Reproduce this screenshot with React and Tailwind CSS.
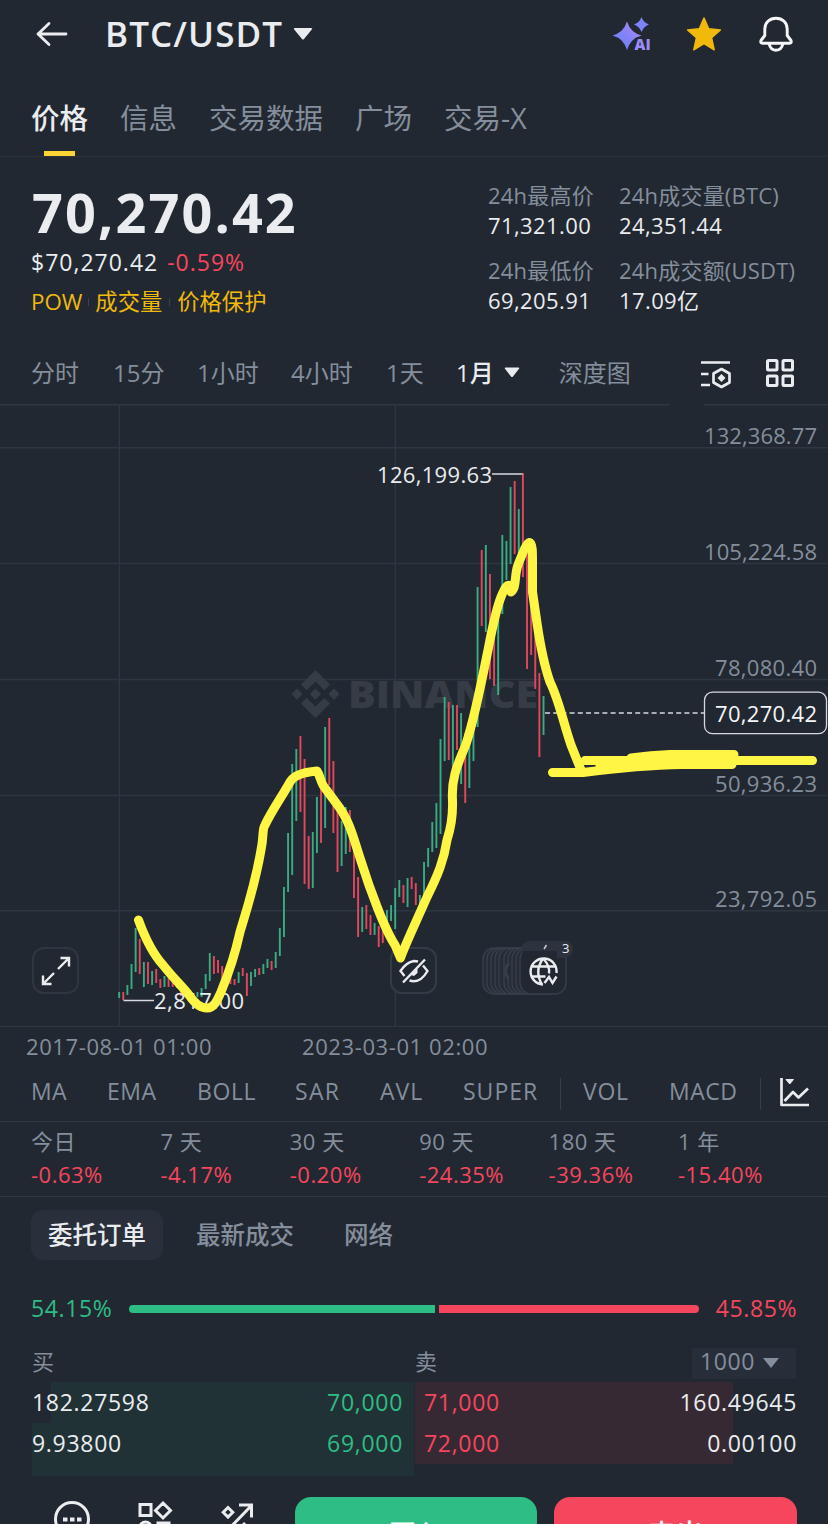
const mainTabs = ['价格', '信息', '交易数据', '广场', '交易-X'];

const stats = [
  { label: '24h最高价', value: '71,321.00' },
  { label: '24h成交量(BTC)', value: '24,351.44' },
  { label: '24h最低价', value: '69,205.91' },
  { label: '24h成交额(USDT)', value: '17.09亿' },
];

const performance = [
  { label: '今日', value: '-0.63%' },
  { label: '7 天', value: '-4.17%' },
  { label: '30 天', value: '-0.20%' },
  { label: '90 天', value: '-24.35%' },
  { label: '180 天', value: '-39.36%' },
  { label: '1 年', value: '-15.40%' },
];

// [direction, high y, low y], one entry per month
const candles = [
  ['g', 992, 998], ['r', 992, 1000], ['g', 985, 995], ['g', 964, 989], ['g', 928, 972],
  ['r', 939, 974], ['g', 962, 987], ['r', 962, 984], ['g', 971, 985], ['r', 969, 983],
  ['r', 979, 988], ['g', 976, 987], ['r', 977, 987], ['r', 980, 987], ['g', 981, 988],
  ['r', 984, 996], ['r', 990, 997], ['g', 991, 998], ['r', 993, 998], ['g', 992, 997],
  ['g', 988, 997], ['g', 974, 989], ['g', 953, 981], ['r', 956, 974], ['r', 960, 973],
  ['r', 966, 983], ['r', 968, 981], ['r', 970, 984], ['r', 979, 985], ['g', 972, 983],
  ['r', 968, 976], ['r', 973, 996], ['g', 972, 986], ['g', 969, 977], ['r', 968, 975],
  ['g', 964, 974], ['g', 959, 968], ['r', 961, 970], ['g', 952, 968], ['g', 928, 956],
  ['g', 887, 937], ['g', 833, 892], ['g', 764, 875], ['g', 749, 821], ['r', 736, 812],
  ['r', 759, 884], ['r', 836, 889], ['g', 832, 888], ['g', 797, 853], ['r', 780, 843],
  ['g', 727, 828], ['r', 718, 785], ['r', 761, 833], ['r', 806, 872], ['g', 821, 866],
  ['g', 807, 854], ['r', 810, 852], ['r', 843, 898], ['r', 877, 937], ['g', 907, 932],
  ['r', 905, 929], ['r', 915, 935], ['g', 923, 935], ['r', 926, 947], ['r', 930, 943],
  ['g', 910, 930], ['g', 905, 921], ['g', 888, 929], ['g', 880, 897], ['r', 885, 903],
  ['g', 878, 907], ['r', 877, 889], ['r', 883, 905], ['g', 895, 905], ['g', 862, 900],
  ['g', 848, 867], ['g', 822, 852], ['g', 803, 848], ['g', 739, 834], ['g', 697, 761],
  ['r', 702, 760], ['g', 705, 770], ['r', 705, 750], ['g', 713, 784], ['r', 733, 803],
  ['g', 733, 788], ['g', 723, 761], ['g', 587, 727], ['r', 550, 626], ['g', 545, 632],
  ['r', 574, 679], ['r', 633, 686], ['g', 613, 695], ['g', 535, 614], ['g', 541, 580],
  ['g', 487, 564], ['r', 481, 554], ['g', 509, 553], ['r', 473, 577], ['r', 552, 669],
  ['r', 607, 655], ['r', 620, 689], ['r', 673, 757], ['g', 696, 735],
];

const axisLabels = [
  { y: 444, text: '132,368.77', w: 113 },
  { y: 560, text: '105,224.58', w: 113 },
  { y: 675.5, text: '78,080.40', w: 102 },
  { y: 791.5, text: '50,936.23', w: 102 },
  { y: 907, text: '23,792.05', w: 102 },
];

const Header = () => (
  <div className="flex h-[68px] items-center pl-9 pr-[35px]">
    <svg width="32" height="26" viewBox="0 0 32 26" fill="none" stroke="#eaecef" strokeWidth="2.8" strokeLinecap="round" strokeLinejoin="round">
      <path d="M30 13H2M13 2.5L2 13l11 10.5" />
    </svg>
    <h1 className="ml-[37px] text-[35px] font-semibold leading-[50px] tracking-[1.1px]">BTC/USDT</h1>
    <svg className="ml-2.5" width="20" height="14" viewBox="0 0 20 14" fill="#eaecef">
      <path d="M2 1h16q2 0 .8 1.6L11 12q-1 1.200-2 0L1.200 2.600Q0 1 2 1z" />
    </svg>
    <div className="ml-auto flex items-center">
      <svg width="40" height="38" viewBox="0 0 40 38">
        <defs>
          <linearGradient id="ai" x1="0" y1="1" x2="1" y2="0">
            <stop offset="0" stopColor="#5f7cf5" />
            <stop offset="0.5" stopColor="#8583f8" />
            <stop offset="1" stopColor="#b08bf0" />
          </linearGradient>
        </defs>
        <path fill="url(#ai)" d="M15 6.500Q18.500 17.500 29.500 20.500Q18.500 23.500 15 35Q11.500 23.500 .5 20.500Q11.500 17.500 15 6.500z" />
        <path fill="#7c83f7" d="M29.500 2Q31.500 7.500 37 9.500Q31.500 11.500 29.500 17Q27.500 11.500 22 9.500Q27.500 7.500 29.500 2z" />
        <text x="22.500" y="34.500" fontSize="15" fontWeight="800" fill="#9b8cf5" stroke="#222831" strokeWidth="3" paintOrder="stroke">AI</text>
      </svg>
      <svg className="ml-[34px]" width="36" height="36" viewBox="0 0 36 36" fill="#f0b90b" stroke="#f0b90b" strokeWidth="1.500" strokeLinejoin="round">
        <path d="M18 2l4.700 10.800 11.700 1.200-8.800 7.800 2.600 12L18 27.700 7.800 33.800l2.600-12L1.600 14l11.700-1.200z" />
      </svg>
      <svg className="ml-[37px]" width="34" height="36" viewBox="0 0 34 36" fill="none" stroke="#f5f6f8" strokeWidth="2.900" strokeLinejoin="round">
        <path d="M17 2.200C10.500 2.200 5.800 6.800 5.800 13v6.500L2 24.500q-1 2.700 1.600 2.700h26.800q2.600 0 1.600-2.700l-3.800-5V13C28.200 6.800 23.500 2.200 17 2.200z" />
        <path d="M10 27.500q1.500 6.700 7 6.700t7-6.700" />
      </svg>
    </div>
  </div>
);

const PriceSection = () => (
  <div className="flex h-[187px] justify-between pl-8 pr-[31px]">
    <div className="pt-5">
      <div className="text-[54px] font-bold leading-[71px] tracking-[2.1px]">70,270.42</div>
      <div className="-ml-px flex gap-[9px] text-[23px] font-medium leading-7 tracking-[1px]">
        <span>$70,270.42</span>
        <span className="text-[#f6465d]">-0.59%</span>
      </div>
      <div className="-ml-px mt-3 flex items-center text-[22.3px] leading-7 text-[#f0b90b]">
        <span>POW</span>
        <span className="mx-1.5 h-2 w-px bg-[#3b424d]" />
        <span>成交量</span>
        <span className="mx-[7px] h-2 w-px bg-[#3b424d]" />
        <span>价格保护</span>
      </div>
    </div>
    <div className="grid h-[150px] w-[309px] grid-cols-[131px_178px] pt-6">
      {stats.map((item) => (
        <div key={item.label} className="h-[75px] whitespace-nowrap text-[22px]">
          <div className="leading-[29px] tracking-[0.2px] text-[#848e9c]">{item.label}</div>
          <div className="leading-[30px] tracking-[0.4px]">{item.value}</div>
        </div>
      ))}
    </div>
  </div>
);

const IntervalBar = () => (
  <div className="flex h-[60px] items-center pb-[3px] pl-[31px] pr-8 text-2xl text-[#848e9c]">
    <span className="w-[82px]">分时</span>
    <span className="w-[84px]">15分</span>
    <span className="w-[94px]">1小时</span>
    <span className="w-[95px]">4小时</span>
    <span className="w-[70px]">1天</span>
    <span className="font-medium text-[#eaecef]">1月</span>
    <svg className="ml-2.5" width="16" height="11" viewBox="0 0 16 11" fill="#eaecef">
      <path d="M1.500 .5h13q1.500 0 .5 1.300L9 9.500q-1 1-2 0L1 1.800Q0 .5 1.500 .5z" />
    </svg>
    <span className="ml-[39px]">深度图</span>
    <svg className="ml-auto mt-0.5" width="32" height="30" viewBox="0 0 32 30" fill="none" stroke="#eaecef" strokeWidth="2.700">
      <path d="M1 3.500h29M1 15h7.500M1 26h9" />
      <path strokeLinejoin="round" d="M21.500 10l8 4.500v9l-8 4.500-8-4.500v-9z" />
      <path fill="#eaecef" stroke="none" d="M21.500 15l4 4-4 4-4-4z" />
    </svg>
    <svg className="ml-8" width="32" height="30" viewBox="0 0 32 30" fill="none" stroke="#eaecef" strokeWidth="3">
      <rect x="3.500" y="2.500" width="9.500" height="9.500" rx="1" />
      <rect x="19" y="2.500" width="9.500" height="9.500" rx="1" />
      <rect x="3.500" y="18" width="9.500" height="9.500" rx="1" />
      <rect x="19" y="18" width="9.500" height="9.500" rx="1" />
    </svg>
  </div>
);

const Chart = () => (
  <div className="relative h-[622px]">
    <svg className="block" width="828" height="622" viewBox="0 404 828 622" fontSize="22">
      <g stroke="#2f3641" strokeWidth="1.500">
        <path d="M0 404.700H670M704 404.700H828M0 447.700H828M0 563.500H828M0 679.500H828M0 795.500H828M0 910.700H828" />
        <path d="M119.300 404V1026M395.300 404V1026" />
      </g>

      {/* watermark */}
      <g fill="#363c46">
        <path d="M315.500 670l14.500 14.500-5.700 5.700-8.800-8.800-8.800 8.800-5.700-5.700z" />
        <path d="M315.500 718l14.500-14.500-5.700-5.700-8.800 8.800-8.800-8.800-5.700 5.700z" />
        <path d="M315.500 688.500l5.600 5.600-5.600 5.600-5.600-5.600zM297 688.500l5.600 5.600-5.600 5.600-5.600-5.600zM334 688.500l5.600 5.600-5.600 5.600-5.600-5.600z" />
        <text x="348" y="707.500" fontSize="37" fontWeight="800" textLength="190" lengthAdjust="spacingAndGlyphs">BINANCE</text>
      </g>

      {candles.map(([dir, high, low], i) => (
        <rect key={i} x={118.2 + i * 4.12} y={high} width="1.900" height={low - high} fill={dir === 'g' ? '#3bab82' : '#e2475d'} />
      ))}

      <g fill="none" stroke="#d5d8de" strokeWidth="1.400">
        <path d="M492 474h30.500M123.500 1000.500H154" />
        <path strokeDasharray="5 3.200" d="M545 713H704" />
      </g>
      <text x="377" y="482.500" fill="#eaecef" textLength="115">126,199.63</text>
      <text x="154" y="1009" fill="#eaecef" textLength="90">2,817.00</text>

      {axisLabels.map((label) => (
        <text key={label.text} x={817 - label.w} y={label.y} fill="#848e9c" textLength={label.w}>{label.text}</text>
      ))}
      <rect x="704.500" y="692.200" width="122" height="41.500" rx="8" fill="#222831" stroke="#d5d8de" strokeWidth="1.300" />
      <text x="715" y="721.500" fill="#f5f6f8" fontWeight="500" textLength="102">70,270.42</text>
    </svg>

    <div className="absolute left-8 top-[543px] flex h-[47px] w-[47px] items-center justify-center rounded-xl border-2 border-[#2f3641]">
      <svg width="30" height="30" viewBox="0 0 30 30" fill="none" stroke="#eaecef" strokeWidth="2.400">
        <path d="M17 13L27.500 2.500M19.500 2h8.500v8.500M13 17L2.500 27.500M2 19.500V28h8.500" />
      </svg>
    </div>
    <div className="absolute left-[390px] top-[543px] flex h-[47px] w-[47px] items-center justify-center rounded-xl border-2 border-[#343b46] bg-[#222831]">
      <svg width="32" height="28" viewBox="0 0 32 28" fill="none" stroke="#eaecef" strokeWidth="2.400">
        <path d="M20 4.500Q18 4 16 4Q8 5.500 2.500 14l4 5M11.500 23.500Q22 27 29.500 14l-4.500-5.500M27 2.500L5 25.500" />
        <path d="M13 18l6.500-6.500v4.500l-3.500 3z" fill="#eaecef" stroke="none" />
      </svg>
    </div>
    {/* stacked event markers */}
    <div className="absolute left-[482px] top-[536px] h-[56px] w-[94px]">
      <svg width="94" height="56" viewBox="0 0 94 56" fill="#262c36" stroke="#373e49" strokeWidth="1.500">
        {[1, 5, 9, 13, 17, 22, 26, 30, 34].map((x) => (
          <rect key={x} x={x} y="8" width="46" height="46" rx="11" />
        ))}
        <path d="M27 23q-7 8 0 16" strokeWidth="3" />
        <rect x="38" y="8" width="46" height="46" rx="11" fill="#222831" />
        <rect x="39" y="1" width="52" height="17" rx="8.500" fill="#2c333e" stroke="none" />
        <rect x="41" y="11" width="34" height="8" fill="#222831" stroke="none" />
        <path d="M62 9l2.500-4" stroke="#c8ccd2" />
        <text x="80" y="13" fontSize="13" fill="#eaecef" stroke="none">3</text>
        <g fill="none" stroke="#eaecef" strokeWidth="2.400">
          <path d="M61 44.500A13 13 0 1 1 74.500 33M48.500 26.500h25M48.500 36.500h15M61 18.500q-9 12.500-1 26M61 18.500q7 7 6 15" />
          <path d="M62.500 43l4.500-6 3.500 6 4-6.500" />
        </g>
      </svg>
    </div>

    {/* hand drawn trend */}
    <svg className="pointer-events-none absolute left-0 top-0" width="828" height="622" viewBox="0 404 828 622" fill="none" stroke="#fff545" strokeWidth="9" strokeLinecap="round" strokeLinejoin="round">
      <path d="M138.500 920C145 938 153 954 163 965C175 980 182 986 189 995C195 1004 200 1008 207 1008C214 1008 217 1001 221 992C228 975 235 955 240 932C246 912 255 885 261 850C264 836 262 829 265 825C272 810 283 795 290 782C294 775 305 772 317 771C320 775 321 784 325 788L339 807C350 822 354 840 361 861C370 890 385 930 395 945L400.500 958C405 945 416 922 427 897C438 875 444 860 447 840C452 825 453 815 452.500 800C451 775 460 760 466 744C474 720 480 690 487 655C492 630 495 612 501 597C505 587 507 584 510.500 586L511 592C517 588 514 575 518 565C522 555 526 543 529.500 542.500C533 543 532.500 555 532.500 568V592L537 623C541 650 545 668 550 682C559 700 563 722 571 745L581 770" />
      <path d="M585 760.500H812.500M552.500 772.500H583C610 769 650 765 682 764.500H732M631 758C645 756 655 755 670 754.500H734" />
      <path d="M600 766L640 760H734" />
    </svg>
  </div>
);

const IndicatorBar = () => (
  <div className="flex h-[55px] items-center pl-[31px] text-[23px] text-[#848e9c]">
    <span className="-mt-1 w-[76px] tracking-[0.3px]">MA</span>
    <span className="-mt-1 w-[90px] tracking-[0.5px]">EMA</span>
    <span className="-mt-1 w-[98px] tracking-[0.6px]">BOLL</span>
    <span className="-mt-1 w-[85px] tracking-[1.3px]">SAR</span>
    <span className="-mt-1 w-[83px] tracking-[1px]">AVL</span>
    <span className="-mt-1 w-[97px] tracking-[1px]">SUPER</span>
    <span className="h-8 w-px bg-[#363d48]" />
    <span className="-mt-1 ml-[22px] w-[86px] tracking-[0.7px]">VOL</span>
    <span className="-mt-1 w-[91px] tracking-[0.5px]">MACD</span>
    <span className="h-8 w-px bg-[#363d48]" />
    <svg className="-mt-1 ml-[18px]" width="32" height="32" viewBox="0 0 32 32" fill="none" stroke="#eaecef" strokeWidth="2.700" strokeLinejoin="round">
      <path d="M2.500 2v27h27.500M5.500 25l8.500-9 5.500 5.500 9.500-9" />
      <path d="M7 3.500h7.500L10.700 8z" fill="#eaecef" strokeWidth="1" />
    </svg>
  </div>
);

const OrderBook = () => (
  <div className="h-[279px] overflow-hidden">
    <div className="flex h-[75px] items-center pl-[31px] text-[24.5px] font-medium text-[#848e9c]">
      <span className="flex h-[50px] w-[132px] items-center justify-center rounded-xl bg-[#29303b] pt-0.5 text-[#eaecef]">委托订单</span>
      <span className="ml-[33px] pt-0.5">最新成交</span>
      <span className="ml-[50px] pt-0.5">网络</span>
    </div>
    <div className="flex h-[73px] items-center pl-[31px] pr-[31px] text-[23px] tracking-[0.6px]">
      <span className="w-[98px] text-[#2ebd85]">54.15%</span>
      <div className="flex h-2 flex-1 gap-1">
        <div className="w-[306px] rounded-l-full bg-[#2ebd85]" />
        <div className="flex-1 rounded-r-full bg-[#f6465d]" />
      </div>
      <span className="w-[98px] text-right text-[#f6465d]">45.85%</span>
    </div>
    <div className="flex h-[37px] items-center pb-1 pl-8 pr-8 text-[22px] text-[#848e9c]">
      <span className="w-[383px]">买</span>
      <span>卖</span>
      <div className="ml-auto mt-[3px] flex h-[31px] w-[104px] items-center bg-[#272e39] pb-1 pl-2 text-[23px] tracking-[0.6px]">
        1000
        <svg className="ml-2 mt-1" width="16" height="10" viewBox="0 0 16 10" fill="#848e9c"><path d="M0 0h16L8 10z" /></svg>
      </div>
    </div>
    <div className="flex text-[23px] leading-[41px] tracking-[0.7px]">
      <div className="w-[414px] pl-8">
        <div className="relative flex justify-between pr-[11px]">
          <div className="absolute inset-y-0 left-[19px] right-0 bg-[#213236]" />
          <span className="relative">182.27598</span>
          <span className="relative text-[#2ebd85]">70,000</span>
        </div>
        <div className="flex justify-between bg-[#213236] pr-[11px]">
          <span>9.93800</span>
          <span className="text-[#2ebd85]">69,000</span>
        </div>
        <div className="h-3 bg-[#213236]" />
      </div>
      <div className="flex-1 pr-[31px]">
        <div className="relative flex justify-between pl-2.5">
          <div className="absolute inset-y-0 left-px right-[64px] bg-[#372933]" />
          <span className="relative text-[#f6465d]">71,000</span>
          <span className="relative">160.49645</span>
        </div>
        <div className="relative flex justify-between pl-2.5">
          <div className="absolute inset-y-0 left-px right-[64px] bg-[#372933]" />
          <span className="relative text-[#f6465d]">72,000</span>
          <span className="relative">0.00100</span>
        </div>
      </div>
    </div>
  </div>
);

const BottomBar = () => (
  <div className="flex h-12 items-start overflow-hidden pt-[21px] text-[28px] font-medium text-white">
    <svg width="295" height="27" viewBox="0 1497 295 27" fill="none" stroke="#eaecef" strokeWidth="3">
      <circle cx="72" cy="1519" r="16.500" />
      <path strokeWidth="4" d="M63 1519.500h4.500M70 1519.500h4.500M77 1519.500h4.500" />
      <path d="M140 1504.500h11v11h-11zM163 1503l7.500 7.500-7.500 7.500-7.500-7.500zM158 1523h11v11h-11z" />
      <circle cx="145.500" cy="1528" r="6" />
      <path d="M228 1507.500l4.800 4.800-4.800 4.800-4.800-4.800zM224 1534l27-28M239 1505h12.500v12.500M243 1523l4 4" />
    </svg>
    <div className="flex h-[74px] w-[242px] items-center justify-center rounded-2xl bg-[#2ebd85]">买入</div>
    <div className="ml-[17px] flex h-[74px] w-[243px] items-center justify-center rounded-2xl bg-[#f6465d]">卖出</div>
  </div>
);

const App = () => {
  return (
    <div className="h-[1524px] w-[828px] overflow-hidden bg-[#222831] font-['Open_Sans','Noto_Sans_CJK_SC',sans-serif] text-[#eaecef]">
      <Header />
      <div className="flex h-[89px] gap-8 border-b border-[#2c333d] pl-[31px] text-[28.5px] text-[#848e9c]">
        {mainTabs.map((tab, i) => (
          <div key={tab} className={i === 0 ? 'flex flex-col items-center justify-between font-medium text-[#eaecef]' : ''}>
            <span className="mt-[29px] block leading-[42px]">{tab}</span>
            {i === 0 && <span className="h-[5px] w-[31px] bg-[#fcd535]" />}
          </div>
        ))}
      </div>
      <PriceSection />
      <IntervalBar />
      <Chart />
      <div className="flex h-10 border-t border-[#2f3641] pl-[26px] text-[22px] leading-[38px] tracking-[0.6px] text-[#848e9c]">
        <span className="w-[276px]">2017-08-01 01:00</span>
        <span>2023-03-01 02:00</span>
      </div>
      <IndicatorBar />
      <div className="grid h-[76px] grid-cols-[repeat(6,129.4px)] border-y border-[#2f3641] pl-[31px] pt-[3px] text-[22px] tracking-[0.5px]">
        {performance.map((item) => (
          <div key={item.label}>
            <div className="leading-8 text-[#848e9c]">{item.label}</div>
            <div className="leading-[35px] text-[#f6465d]">{item.value}</div>
          </div>
        ))}
      </div>
      <OrderBook />
      <BottomBar />
    </div>
  );
};

export default App;
